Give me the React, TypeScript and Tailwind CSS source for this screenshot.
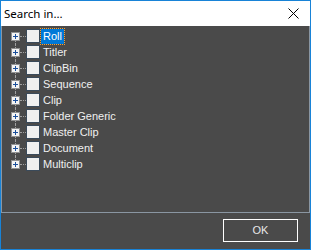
import React from "react";

const items = ["Roll", "Titler", "ClipBin", "Sequence", "Clip", "Folder Generic", "Master Clip", "Document", "Multiclip"];

function Row({ label, selected, first, last }: { label: string; selected?: boolean; first?: boolean; last?: boolean }) {
  return (
    <div className="relative flex h-[16px] items-center">
      <div
        className={`absolute left-[13px] w-0 border-l border-dotted border-[#a0a0a0] ${first ? "top-[8px]" : "top-0"} ${last ? "h-[8px]" : "bottom-0"}`}
      />
      <div className="relative z-10 ml-[9px] flex h-[9px] w-[9px] shrink-0 items-center justify-center border border-[#919191] bg-[#f4f4f4]">
        <svg width="7" height="7" viewBox="0 0 7 7" className="block">
          <rect x="1" y="3" width="5" height="1" fill="#1a4f9c" />
          <rect x="3" y="1" width="1" height="5" fill="#1a4f9c" />
        </svg>
      </div>
      <div className="w-[6px] shrink-0 border-t border-dotted border-[#a0a0a0]" />
      <div className="h-[14px] w-[14px] shrink-0 border border-[#3a4a5a] bg-[#f0f0f0]" />
      <div className="ml-[1px] flex h-[16px] items-center">
        <span
          className={`px-[2px] text-[11px] leading-[15px] ${selected ? "bg-[#0078d7] text-white outline-1 outline-dotted outline-[#f7a235]" : "text-[#f0f0f0]"}`}
          style={{ fontFamily: '"Liberation Sans", Arial, sans-serif' }}
        >
          {label}
        </span>
      </div>
    </div>
  );
}

export default function App() {
  return (
    <div
      className="flex h-[250px] w-[311px] flex-col border border-[#1883d7] bg-[#4a4a4a]"
      style={{ fontFamily: '"Noto Sans", "Open Sans", sans-serif' }}
    >
      <div className="flex h-[25px] shrink-0 items-center justify-between bg-white pl-[3px] pr-[11px]">
        <span className="text-[11.5px] text-black">Search in...</span>
        <svg width="11" height="11" viewBox="0 0 11 11">
          <path d="M0.5 0.5 L10.5 10.5 M10.5 0.5 L0.5 10.5" stroke="#000" strokeWidth="1" />
        </svg>
      </div>
      <div className="flex h-[187px] shrink-0 flex-col border-x border-b border-[#8a96a2] pt-[2px]">
        {items.map((it, i) => (
          <Row key={it} label={it} selected={i === 0} first={i === 0} last={i === items.length - 1} />
        ))}
      </div>
      <div className="flex flex-1 items-start justify-end pr-[12px] pt-[6px]">
        <button
          className="flex h-[23px] w-[75px] items-center justify-center border border-white text-[11px] text-[#e8e8e8]"
          style={{ fontFamily: '"Liberation Sans", Arial, sans-serif' }}
        >
          OK
        </button>
      </div>
    </div>
  );
}
